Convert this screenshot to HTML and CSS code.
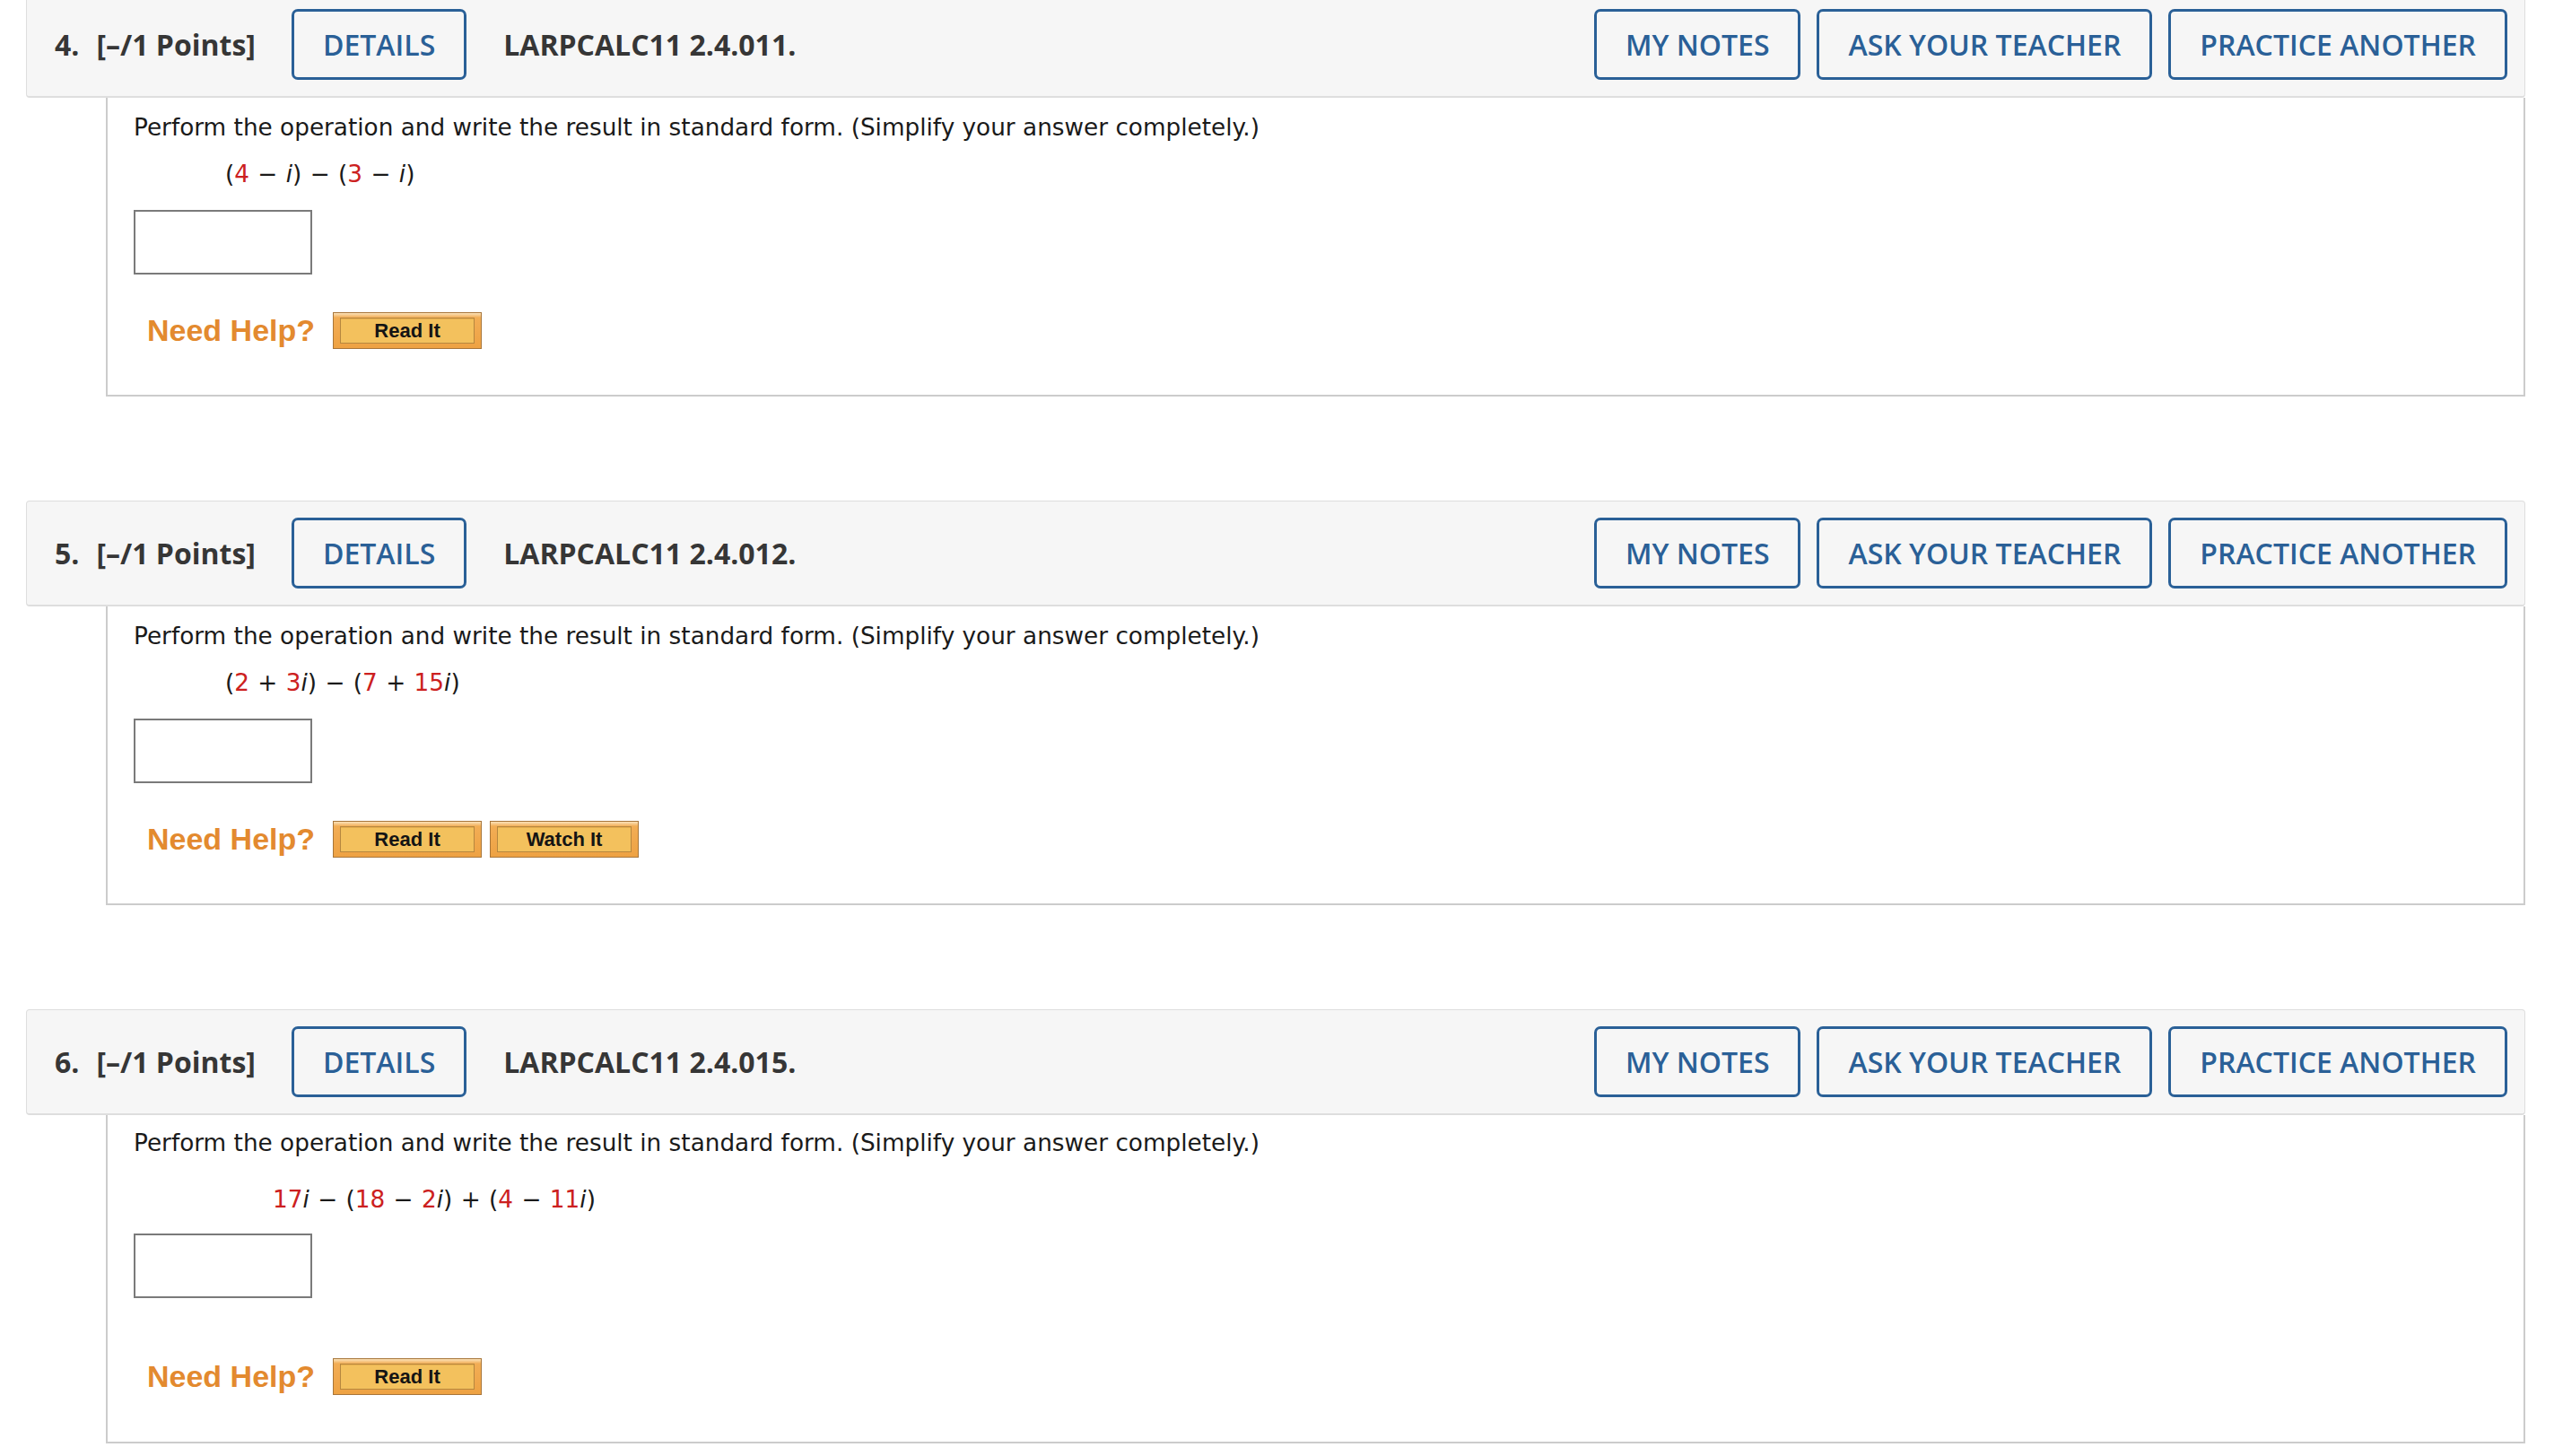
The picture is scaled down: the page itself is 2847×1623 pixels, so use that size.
FILE: index.html
```html
<!DOCTYPE html>
<html lang="en">
<head>
<meta charset="utf-8">
<title>Questions</title>
<link rel="stylesheet" href="styles.css">
</head>
<body>
<div class="page">

  <section class="question">
    <div class="q-head">
      <span class="q-num">4.</span>
      <span class="q-points">[–/1 Points]</span>
      <button class="q-btn q-details">DETAILS</button>
      <span class="q-id">LARPCALC11 2.4.011.</span>
      <div class="q-actions">
        <button class="q-btn">MY NOTES</button>
        <button class="q-btn">ASK YOUR TEACHER</button>
        <button class="q-btn">PRACTICE ANOTHER</button>
      </div>
    </div>
    <div class="q-body">
      <p class="q-text">Perform the operation and write the result in standard form. (Simplify your answer completely.)</p>
      <p class="q-expr">(<span class="red">4</span> − <i>i</i>) − (<span class="red">3</span> − <i>i</i>)</p>
      <div class="answer-box"></div>
      <div class="help-row">
        <span class="help-label">Need Help?</span>
        <span class="help-btn"><span class="help-inner">Read It</span></span>
      </div>
    </div>
  </section>

  <section class="question">
    <div class="q-head">
      <span class="q-num">5.</span>
      <span class="q-points">[–/1 Points]</span>
      <button class="q-btn q-details">DETAILS</button>
      <span class="q-id">LARPCALC11 2.4.012.</span>
      <div class="q-actions">
        <button class="q-btn">MY NOTES</button>
        <button class="q-btn">ASK YOUR TEACHER</button>
        <button class="q-btn">PRACTICE ANOTHER</button>
      </div>
    </div>
    <div class="q-body">
      <p class="q-text">Perform the operation and write the result in standard form. (Simplify your answer completely.)</p>
      <p class="q-expr">(<span class="red">2</span> + <span class="red">3</span><i>i</i>) − (<span class="red">7</span> + <span class="red">15</span><i>i</i>)</p>
      <div class="answer-box"></div>
      <div class="help-row">
        <span class="help-label">Need Help?</span>
        <span class="help-btn"><span class="help-inner">Read It</span></span>
        <span class="help-btn"><span class="help-inner">Watch It</span></span>
      </div>
    </div>
  </section>

  <section class="question">
    <div class="q-head">
      <span class="q-num">6.</span>
      <span class="q-points">[–/1 Points]</span>
      <button class="q-btn q-details">DETAILS</button>
      <span class="q-id">LARPCALC11 2.4.015.</span>
      <div class="q-actions">
        <button class="q-btn">MY NOTES</button>
        <button class="q-btn">ASK YOUR TEACHER</button>
        <button class="q-btn">PRACTICE ANOTHER</button>
      </div>
    </div>
    <div class="q-body q-body-tall">
      <p class="q-text">Perform the operation and write the result in standard form. (Simplify your answer completely.)</p>
      <p class="q-expr q-expr-wide"><span class="red">17</span><i>i</i> − (<span class="red">18</span> − <span class="red">2</span><i>i</i>) + (<span class="red">4</span> − <span class="red">11</span><i>i</i>)</p>
      <div class="answer-box answer-box-tight"></div>
      <div class="help-row help-row-far">
        <span class="help-label">Need Help?</span>
        <span class="help-btn"><span class="help-inner">Read It</span></span>
      </div>
    </div>
  </section>

</div>
</body>
</html>
```

FILE: styles.css
```css
* { box-sizing: border-box; }

html, body {
  margin: 0;
  padding: 0;
  background: #ffffff;
}

.page {
  margin-top: -9px;
}

.question {
  margin: 0 32px 116px 29px;
}

.q-head {
  height: 118px;
  display: flex;
  align-items: center;
  padding: 0 19px 0 31px;
  background: #f6f6f6;
  border: 1px solid #dedede;
  border-bottom-width: 2px;
  border-radius: 4px;
  font-family: "Open Sans", "Liberation Sans", sans-serif;
  font-size: 32px;
  color: #363636;
}

.q-num {
  font-weight: 700;
}

.q-points {
  font-weight: 700;
  margin-left: 19px;
}

.q-id {
  font-weight: 700;
  margin-left: 41px;
}

.q-btn {
  font-family: "Open Sans", "Liberation Sans", sans-serif;
  font-size: 32px;
  font-weight: 600;
  color: #2a6097;
  background: transparent;
  border: 3px solid #2a6097;
  border-radius: 7px;
  height: 79px;
  padding: 0 32px;
  line-height: 1;
  cursor: pointer;
}

.q-details {
  margin-left: 40px;
}

.q-actions {
  margin-left: auto;
  display: flex;
  gap: 18px;
}

.q-body {
  margin-left: 89px;
  border: 2px solid #cccccc;
  border-top: none;
  padding: 15px 0 51px 29px;
  font-family: "DejaVu Sans", Verdana, sans-serif;
  font-size: 26.3px;
  color: #1a1a1a;
}

.q-body-tall {
  padding-top: 13px;
  padding-bottom: 52px;
}

.q-text,
.q-expr {
  margin: 0;
  line-height: 36px;
}

.q-expr {
  margin-top: 16px;
  padding-left: 102px;
  word-spacing: 1px;
}

.q-expr-wide {
  margin-top: 27px;
  padding-left: 155px;
}

.red {
  color: #cc2020;
}

.answer-box {
  margin-top: 22px;
  width: 199px;
  height: 72px;
  border: 2px solid #7a7a7a;
  background: #ffffff;
}

.answer-box-tight {
  margin-top: 20px;
}

.help-row {
  margin-top: 42px;
  height: 41px;
  display: flex;
  align-items: center;
  padding-left: 15px;
}

.help-row-far {
  margin-top: 67px;
}

.help-label {
  font-family: "Liberation Sans", Arial, sans-serif;
  font-weight: 700;
  font-size: 34px;
  color: #e38a2f;
  margin-right: 20px;
}

.help-btn {
  display: block;
  width: 166px;
  height: 41px;
  padding: 5px 7px 5px 7px;
  border: 1px solid #a8763a;
  background: linear-gradient(#fbe2b9 0, #f2ad55 5px, #eea243 100%);
  margin-right: 9px;
}

.help-inner {
  display: block;
  height: 29px;
  border: 1px solid #b6873f;
  background: #f3c15d;
  box-shadow: inset 0 1px 0 #e7ad4d;
  font-family: "Liberation Sans", Arial, sans-serif;
  font-weight: 700;
  font-size: 22px;
  line-height: 27px;
  text-align: center;
  color: #141414;
}
```
